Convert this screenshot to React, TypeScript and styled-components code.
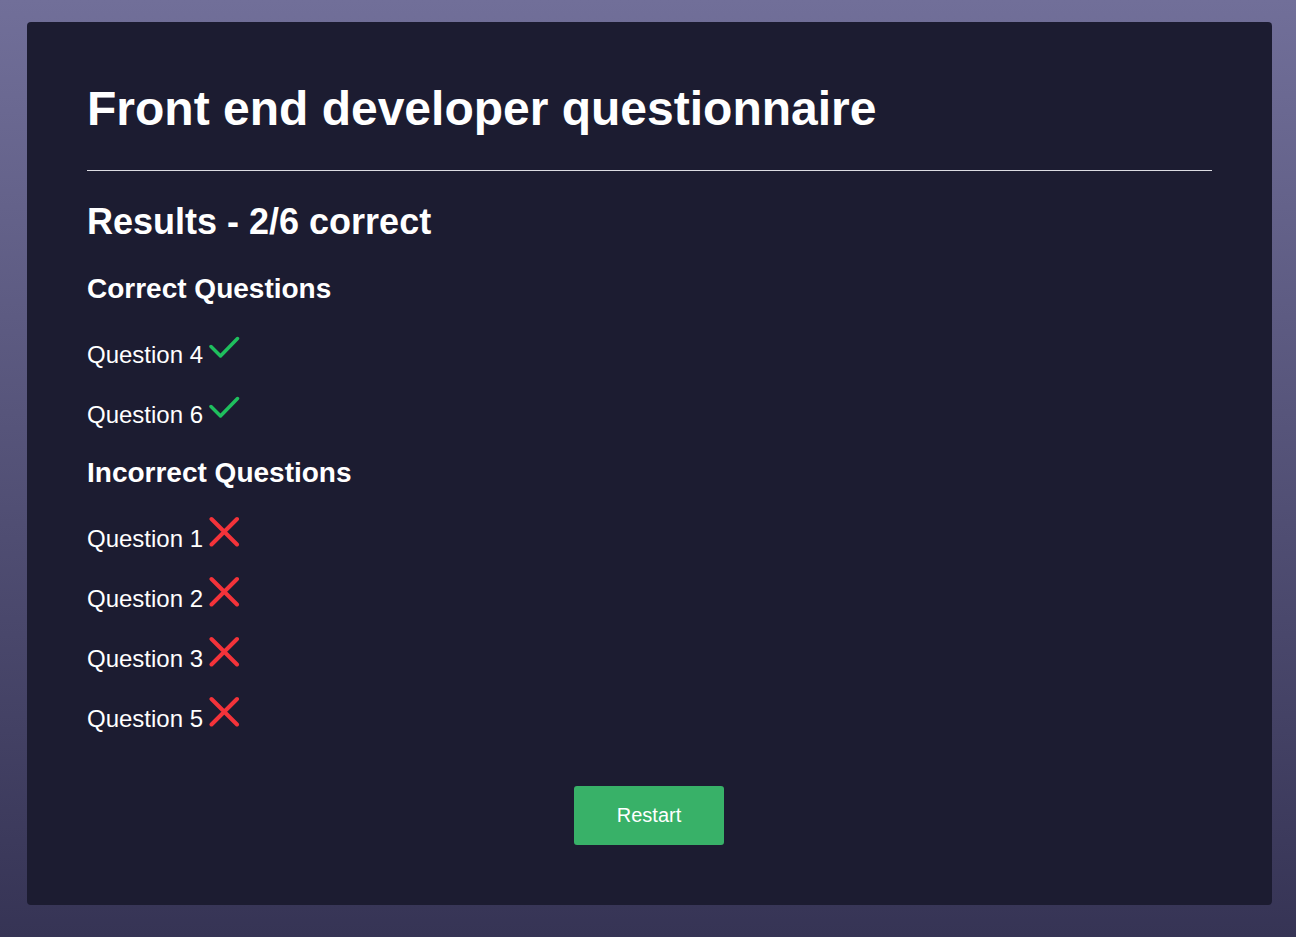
import React from "react";
import styled, { createGlobalStyle } from "styled-components";

const GlobalStyle = createGlobalStyle`
  html, body { margin: 0; padding: 0; }
  body {
    min-height: 100vh;
    background: linear-gradient(180deg, #716f99 0%, #363455 100%);
    font-family: "Liberation Sans", Arial, sans-serif;
    color: #ffffff;
  }
  #root { padding: 22px 24px 32px 27px; box-sizing: border-box; }
`;

const Card = styled.main`
  background: #1c1c31;
  border-radius: 4px;
  padding: 59px 60px 60px;
  display: flex;
  flex-direction: column;
`;

const Title = styled.h1`
  margin: 0;
  font-size: 48px;
  line-height: 56px;
  font-weight: 700;
`;

const Divider = styled.hr`
  margin: 33px 0 0;
  border: none;
  border-top: 1px solid #dcdce2;
  height: 0;
`;

const ResultsHeading = styled.h2`
  margin: 30px 0 0;
  font-size: 36px;
  line-height: 42px;
  font-weight: 700;
`;

const SectionHeading = styled.h3<{ $top: number }>`
  margin: ${(p) => p.$top}px 0 0;
  font-size: 28px;
  line-height: 32px;
  font-weight: 700;
`;

const ItemList = styled.ul<{ $top: number }>`
  list-style: none;
  margin: ${(p) => p.$top}px 0 0;
  padding: 0;
  display: flex;
  flex-direction: column;
  gap: 32px;
`;

const Item = styled.li`
  display: flex;
  align-items: flex-end;
  height: 28px;
  font-size: 24px;
  line-height: 28px;
  gap: 6px;
`;

const IconBox = styled.svg`
  flex: none;
  margin-bottom: 5.7px;
`;

const Footer = styled.div`
  display: flex;
  justify-content: center;
  margin-top: 53px;
`;

const RestartButton = styled.button`
  width: 150px;
  height: 59px;
  margin-right: 1px;
  border: none;
  border-radius: 3px;
  background: #38b168;
  color: #ffffff;
  font-family: "Liberation Sans", Arial, sans-serif;
  font-size: 20px;
  cursor: pointer;
`;

const CheckIcon = () => (
  <IconBox width="32" height="32" viewBox="0 0 32 32" fill="none">
    <path
      d="M2 15.5 L11.5 25 L28.5 7.5"
      stroke="#1fbf5e"
      strokeWidth="3.5"
      strokeLinecap="round"
      strokeLinejoin="round"
    />
  </IconBox>
);

const CrossIcon = () => (
  <IconBox width="32" height="32" viewBox="0 0 32 32" fill="none">
    <path
      d="M2.5 4 L28 29.5 M28 4 L2.5 29.5"
      stroke="#f4333a"
      strokeWidth="4"
      strokeLinecap="round"
    />
  </IconBox>
);

const correct = [4, 6];
const incorrect = [1, 2, 3, 5];

export default function App() {
  return (
    <>
      <GlobalStyle />
      <Card>
        <Title>Front end developer questionnaire</Title>
        <Divider />
        <ResultsHeading>Results - 2/6 correct</ResultsHeading>
        <SectionHeading $top={30}>Correct Questions</SectionHeading>
        <ItemList $top={36}>
          {correct.map((n) => (
            <Item key={n}>
              <span>Question {n}</span>
              <CheckIcon />
            </Item>
          ))}
        </ItemList>
        <SectionHeading $top={28}>Incorrect Questions</SectionHeading>
        <ItemList $top={36}>
          {incorrect.map((n) => (
            <Item key={n}>
              <span>Question {n}</span>
              <CrossIcon />
            </Item>
          ))}
        </ItemList>
        <Footer>
          <RestartButton>Restart</RestartButton>
        </Footer>
      </Card>
    </>
  );
}
